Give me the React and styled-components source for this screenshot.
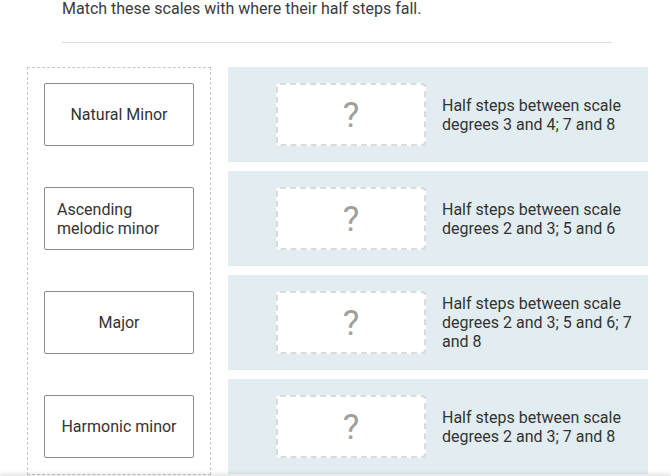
import styled, { createGlobalStyle } from "styled-components";

const scales = [
  { label: "Natural Minor", align: "center" },
  { label: "Ascending melodic minor", align: "left" },
  { label: "Major", align: "center" },
  { label: "Harmonic minor", align: "center" },
];

const answers = [
  "Half steps between scale degrees 3 and 4; 7 and 8",
  "Half steps between scale degrees 2 and 3; 5 and 6",
  "Half steps between scale degrees 2 and 3; 5 and 6; 7 and 8",
  "Half steps between scale degrees 2 and 3; 7 and 8",
];

const App = () => {
  return (
    <>
      <GlobalStyle />
      <Page>
        <Prompt>Match these scales with where their half steps fall.</Prompt>
        <Divider />
        <Board>
          <Bank>
            {scales.map((s) => (
              <Card key={s.label} $align={s.align}>
                {s.label}
              </Card>
            ))}
          </Bank>
          <Targets>
            {answers.map((a) => (
              <Row key={a}>
                <Drop>?</Drop>
                <Answer>{a}</Answer>
              </Row>
            ))}
          </Targets>
        </Board>
      </Page>
      <FooterShadow />
    </>
  );
};

const GlobalStyle = createGlobalStyle`
  html, body {
    margin: 0;
    padding: 0;
    background: #fff;
    overflow: hidden;
  }

  body {
    font-family: Roboto, "Liberation Sans", sans-serif;
    color: #333;
  }
`;

const Page = styled.div`
  padding-left: 27px;
  width: 621px;
`;

const Prompt = styled.div`
  margin-top: -3px;
  margin-left: 35px;
  font-size: 16px;
  line-height: 24px;
  color: #3b3b3b;
`;

const Divider = styled.div`
  margin: 21px 0 24px 35px;
  width: 550px;
  height: 1px;
  background: #dcdcdc;
`;

const Board = styled.div`
  display: flex;
  gap: 17px;
  align-items: flex-start;
`;

const Bank = styled.div`
  box-sizing: border-box;
  width: 184px;
  padding: 15px 16px 16px;
  border: 1px dashed #c8c8c8;
  display: flex;
  flex-direction: column;
  gap: 41px;
  height: 408px;
`;

const Card = styled.div`
  box-sizing: border-box;
  height: 63px;
  padding: 0 12px;
  border: 1px solid #8c8c8c;
  border-radius: 2px;
  background: #fff;
  display: flex;
  align-items: center;
  justify-content: ${(p) => (p.$align === "left" ? "flex-start" : "center")};
  text-align: ${(p) => p.$align};
  font-size: 16px;
  line-height: 19px;
  color: #333;
`;

const Targets = styled.div`
  display: flex;
  flex-direction: column;
  gap: 9px;
  width: 420px;
`;

const Row = styled.div`
  box-sizing: border-box;
  height: 95px;
  padding: 0 14px 0 48px;
  background: #e1edf1;
  display: flex;
  align-items: center;
  gap: 16px;
`;

const Drop = styled.div`
  box-sizing: border-box;
  flex: 0 0 150px;
  height: 63px;
  padding-top: 2px;
  border: 2px dashed #dadada;
  border-radius: 4px;
  background: #fff;
  display: flex;
  align-items: center;
  justify-content: center;
  font-size: 35px;
  font-weight: 400;
  color: #a0a0a0;
`;

const Answer = styled.div`
  font-size: 16px;
  line-height: 19px;
  color: #333;
`;

const FooterShadow = styled.div`
  position: fixed;
  left: 0;
  right: 0;
  bottom: -6px;
  height: 6px;
  box-shadow: 0 -2px 5px rgba(0, 0, 0, 0.12);
`;

export default App;
